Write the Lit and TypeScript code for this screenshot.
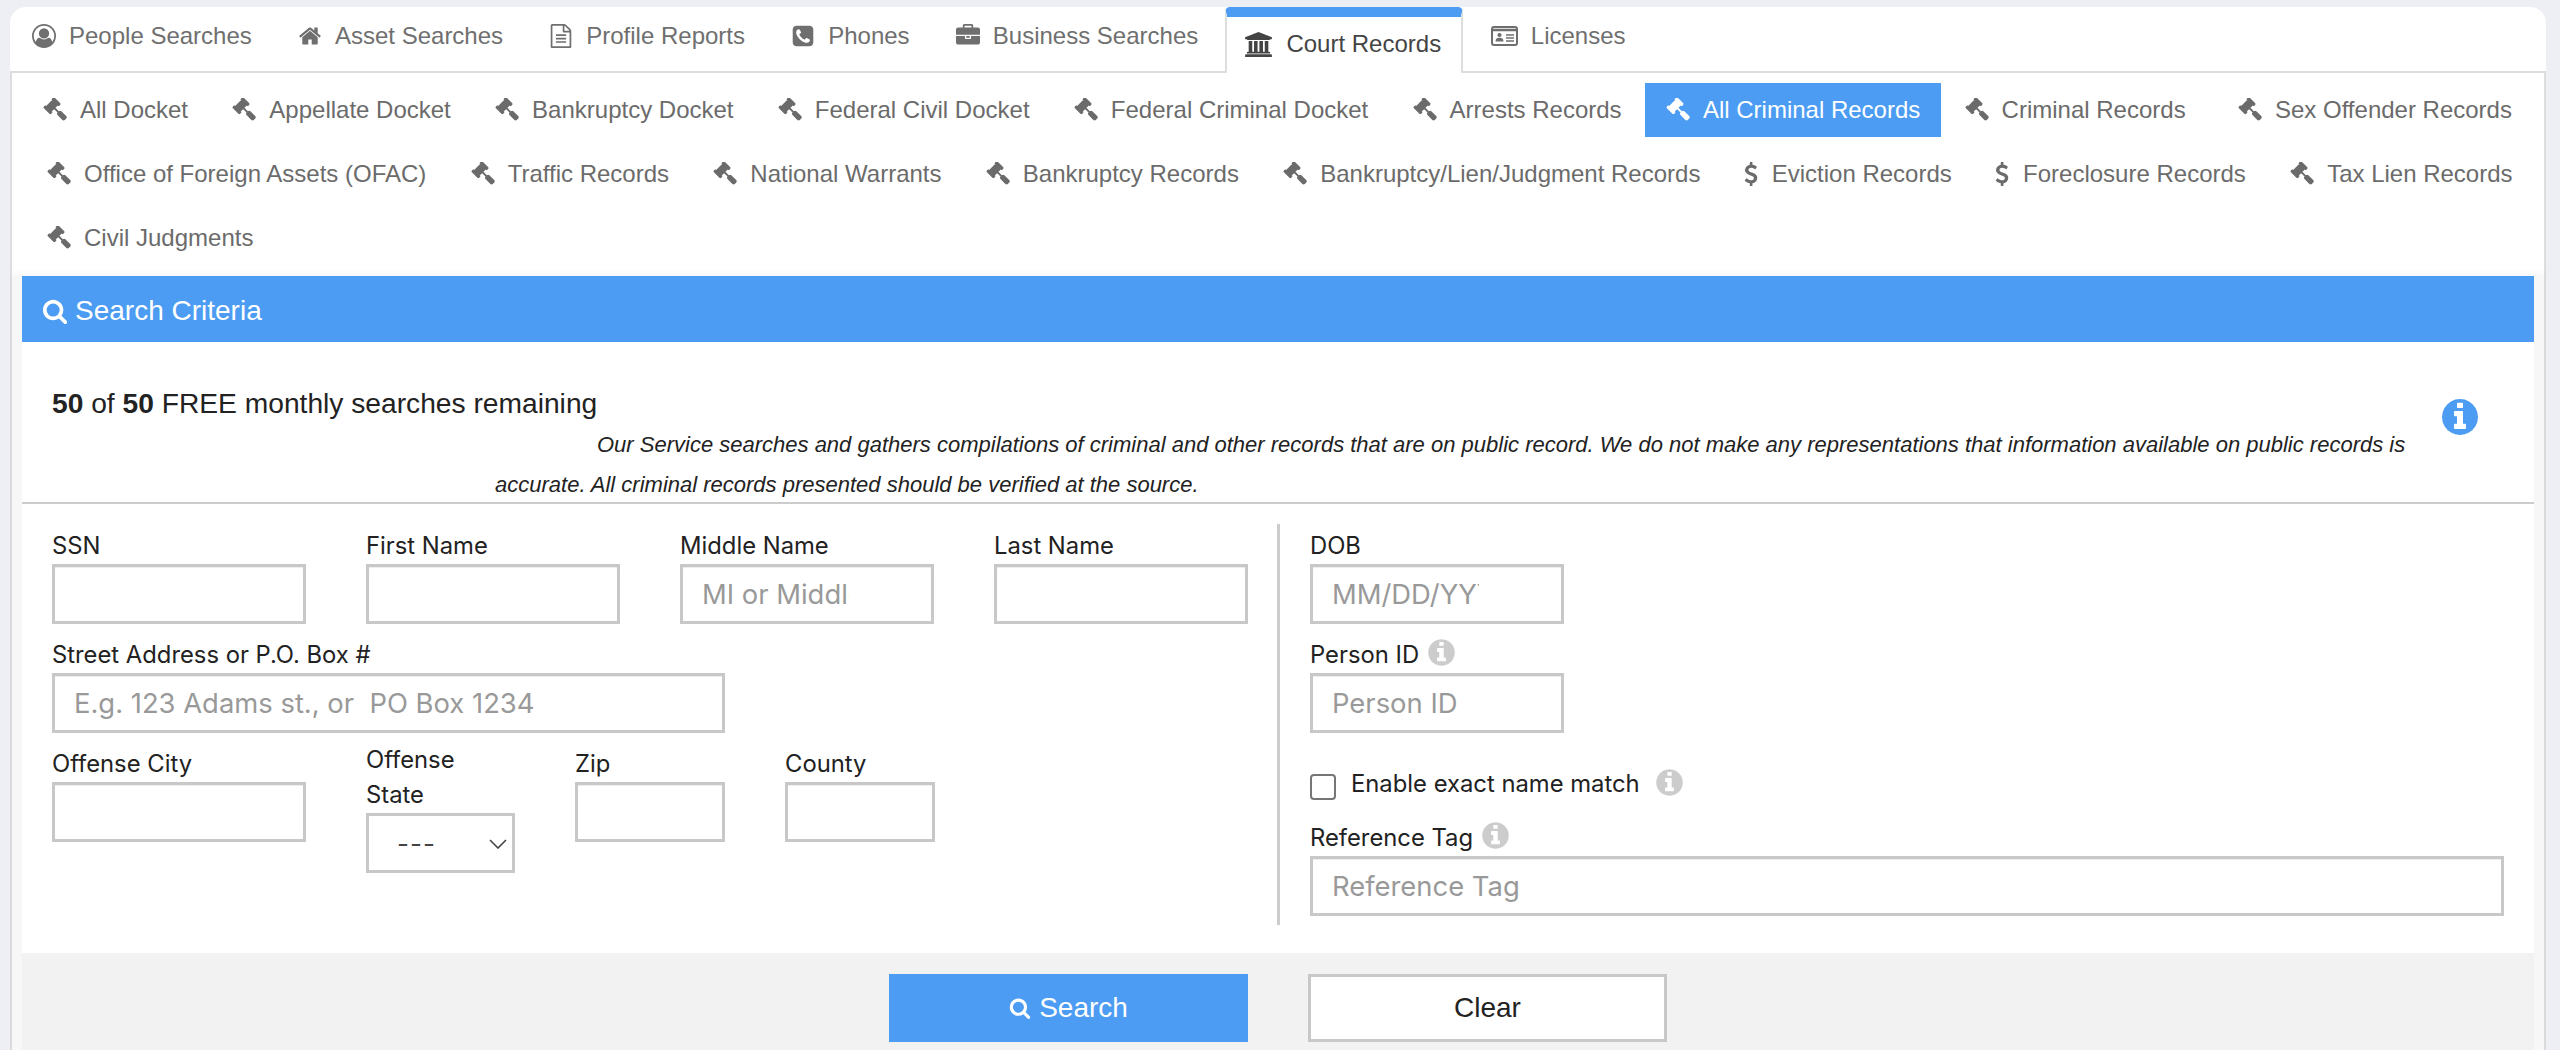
import { LitElement, html, css, svg } from "lit";
import { customElement } from "lit/decorators.js";

const P: Record<string, string> = {
  gavel: "M1771 1440q0 53-37 90l-107 108q-39 37-91 37-53 0-90-37l-363-364q-38-36-38-90 0-53 43-96l-256-256-126 126q-14 14-34 14t-34-14q2 2 12.5 12t12.5 13 10 11.5 10 13.5 6 13.5 5.5 16.5 1.5 18q0 38-28 68-3 3-16.5 18t-19 20.5-18.5 16.5-22 15.5-22 9-26 4.5q-40 0-68-28l-408-408q-28-28-28-68 0-13 4.5-26t9-22 15.5-22 16.5-18.5 20.5-19 18-16.5q30-28 68-28 10 0 18 1.5t16.5 5.5 13.5 6 13.5 10 11.5 10 13 12.5 12 12.5q-14-14-14-34t14-34l348-348q14-14 34-14t34 14q-2-2-12.5-12t-12.5-13-10-11.5-10-13.5-6-13.5-5.5-16.5-1.5-18q0-38 28-68 3-3 16.5-18t19-20.5 18.5-16.5 22-15.5 22-9 26-4.5q40 0 68 28l408 408q28 28 28 68 0 13-4.5 26t-9 22-15.5 22-16.5 18.5-20.5 19-18 16.5q-30 28-68 28-10 0-18-1.5t-16.5-5.5-13.5-6-13.5-10-11.5-10-13-12.5-12-12.5q14 14 14 34t-14 34l-126 126 256 256q43-43 96-43 52 0 91 37l363 363q37 39 37 91z",
  search: "M1216 832q0-185-131.5-316.5t-316.5-131.5-316.5 131.5-131.5 316.5 131.5 316.5 316.5 131.5 316.5-131.5 131.5-316.5zm512 832q0 52-38 90t-90 38q-54 0-90-38l-343-342q-179 124-399 124-143 0-273.5-55.5t-225-150-150-225-55.5-273.5 55.5-273.5 150-225 225-150 273.5-55.5 273.5 55.5 225 150 150 225 55.5 273.5q0 220-124 399l343 343q37 37 37 90z",
  info: "M1152 1376v-160q0-14-9-23t-23-9h-96v-512q0-14-9-23t-23-9h-320q-14 0-23 9t-9 23v160q0 14 9 23t23 9h96v320h-96q-14 0-23 9t-9 23v160q0 14 9 23t23 9h448q14 0 23-9t9-23zm-128-896v-160q0-14-9-23t-23-9h-192q-14 0-23 9t-9 23v160q0 14 9 23t23 9h192q14 0 23-9t9-23zm640 416q0 209-103 385.5t-279.5 279.5-385.5 103-385.5-103-279.5-279.5-103-385.5 103-385.5 279.5-279.5 385.5-103 385.5 103 279.5 279.5 103 385.5z",
  home: "M1472 992v480q0 26-19 45t-45 19h-384v-384h-256v384h-384q-26 0-45-19t-19-45v-480q0-1 .5-3t.5-3l575-474 575 474q1 2 1 6zm223-69l-62 74q-8 9-21 11h-3q-13 0-21-7l-692-577-692 577q-12 8-24 7-13-2-21-11l-62-74q-8-10-7-23.5t11-21.5l719-599q32-26 76-26t76 26l244 204v-195q0-14 9-23t23-9h192q14 0 23 9t9 23v408l219 182q10 8 11 21.5t-7 23.5z",
  file: "M1596 380q28 28 48 76t20 88v1152q0 40-28 68t-68 28h-1344q-40 0-68-28t-28-68v-1600q0-40 28-68t68-28h896q40 0 88 20t76 48zm-444-244v376h376q-10-29-22-41l-313-313q-12-12-41-22zm384 1528v-1024h-416q-40 0-68-28t-28-68v-416h-768v1536h1280zm-1024-864q0-14 9-23t23-9h704q14 0 23 9t9 23v64q0 14-9 23t-23 9h-704q-14 0-23-9t-9-23v-64zm736 224q14 0 23 9t9 23v64q0 14-9 23t-23 9h-704q-14 0-23-9t-9-23v-64q0-14 9-23t23-9h704zm0 256q14 0 23 9t9 23v64q0 14-9 23t-23 9h-704q-14 0-23-9t-9-23v-64q0-14 9-23t23-9h704z",
  phone: "M1408 1193q0-11-2-16t-18-16.5-40.5-25-47.5-26.5-45.5-25-28.5-15q-5-3-19-13t-25-15-21-5q-15 0-36.5 20.5t-39.5 45-38.5 45-33.5 20.5q-7 0-16.5-3.5t-15.5-6.5-17-9.5-14-8.5q-99-55-170-126.5t-127-170.5q-2-3-8.5-14t-9.5-17-6.5-15.5-3.5-16.5q0-13 20.5-33.5t45-38.5 45-39.5 20.5-36.5q0-10-5-21t-15-25-13-19q-3-6-15-28.5t-25-45.5-26.5-47.5-25-40.5-16.5-18-16-2q-48 0-101 22-46 21-80 94.5t-34 130.5q0 16 2.5 34t5 30.5 9 33 10 29.5 12.5 33 11 30q60 164 216.5 320.5t320.5 216.5q6 2 30 11t33 12.5 29.5 10 33 9 30.5 5 34 2.5q57 0 130.5-34t94.5-80q22-53 22-101zm256-777v960q0 119-84.5 203.5t-203.5 84.5h-960q-119 0-203.5-84.5t-84.5-203.5v-960q0-119 84.5-203.5t203.5-84.5h960q119 0 203.5 84.5t84.5 203.5z",
  briefcase: "M640 256h512v-128h-512v128zm1152 640v480q0 66-47 113t-113 47h-1472q-66 0-113-47t-47-113v-480h672v160q0 26 19 45t45 19h320q26 0 45-19t19-45v-160h672zm-768 0v128h-256v-128h256zm768-480v384h-1792v-384q0-66 47-113t113-47h352v-160q0-40 28-68t68-28h576q40 0 68 28t28 68v160h352q66 0 113 47t47 113z",
  bank: "M960 0l960 384v128h-128q0 26-20.5 45t-48.5 19h-1526q-28 0-48.5-19t-20.5-45h-128v-128zm-704 640h256v768h128v-768h256v768h128v-768h256v768h128v-768h256v768h59q28 0 48.5 19t20.5 45v64h-1664v-64q0-26 20.5-45t48.5-19h59v-768zm1595 960q28 0 48.5 19t20.5 45v128h-1920v-128q0-26 20.5-45t48.5-19h1782z",
  user: "M896 0q182 0 348 71t286 191 191 286 71 348q0 181-70.5 347t-190.5 286-286 191.5-349 71.5-349-71-285.5-191.5-190.5-286-71-347.5 71-348 191-286 286-191 348-71zm619 1351q149-205 149-455 0-156-61-298t-164-245-245-164-298-61-298 61-245 164-164 245-61 298q0 250 149 455 66-327 306-327 131 128 313 128t313-128q240 0 306 327zm-235-647q0-159-112.5-271.5t-271.5-112.5-271.5 112.5-112.5 271.5 112.5 271.5 271.5 112.5 271.5-112.5 112.5-271.5z",
  dollar: "M1362 1185q0 153-99.5 263.5t-258.5 136.5v175q0 14-9 23t-23 9h-135q-13 0-22.5-9.5t-9.5-22.5v-175q-66-9-127.5-31t-101.5-44.5-74-48-46.5-37.5-17.5-18q-17-21-2-41l103-135q7-10 23-12 15-2 24 9l2 2q113 99 243 125 37 8 74 8 81 0 142.5-43t61.5-122q0-28-15-53t-33.5-42-58.5-37.5-66-32-80-32.5q-39-16-61.5-25t-61.5-26.5-62.5-31-56.5-35.5-53.5-42.5-43.5-49-35.5-58-21-66.5-8.5-78q0-138 98-242t255-134v-180q0-13 9.5-22.5t22.5-9.5h135q14 0 23 9t9 23v176q57 6 110.5 23t87 33.5 63.5 37.5 39 29 15 14q17 18 5 38l-81 146q-8 15-23 16-14 3-27-7-3-3-14.5-12t-39-26.5-58.5-32-74.5-26-85.5-11.5q-95 0-155 43t-60 111q0 26 8.5 48t29.5 41.5 39.5 33 56 31 60.5 27 70 27.5q53 20 81 31.5t76 35 75.5 42.5 62 50 53 63.5 31.5 76.5 13 94z",
};

function icon(name: string, cls = "ic") {
  if (name === "idcard") {
    return html`<svg class="ic idcard" viewBox="0 0 27 24" fill="none" stroke="currentColor" stroke-width="2">
      <rect x="1" y="3" width="25" height="18" rx="2"></rect>
      <path d="M1 6h25" stroke-width="2.4"></path>
      <circle cx="8.5" cy="11" r="2.1" fill="currentColor" stroke="none"></circle>
      <path d="M4.5 17.5c0-2.8 1.500-3.800 4-3.800s4 1 4 3.800z" fill="currentColor" stroke="none"></path>
      <path d="M15 11h8M15 14h8M15 17h8" stroke-width="1.300"></path>
    </svg>`;
  }
  const vb = name === "bank" ? "0 0 1920 1792" : "0 0 1792 1792";
  return html`<svg class=${cls + " " + name} viewBox=${vb} fill="currentColor">${svg`<path d=${P[name]}></path>`}</svg>`;
}

const TABS = [
  ["user", "People Searches"],
  ["home", "Asset Searches"],
  ["file", "Profile Reports"],
  ["phone", "Phones"],
  ["briefcase", "Business Searches"],
  ["bank", "Court Records", "on"],
  ["idcard", "Licenses"],
];

const ROWS: [string, string, string?][][] = [
  [["gavel", "All Docket"], ["gavel", "Appellate Docket"], ["gavel", "Bankruptcy Docket"], ["gavel", "Federal Civil Docket"], ["gavel", "Federal Criminal Docket"], ["gavel", "Arrests Records"], ["gavel", "All Criminal Records", "on"], ["gavel", "Criminal Records"], ["gavel", "Sex Offender Records", "far"]],
  [["gavel", "Office of Foreign Assets (OFAC)"], ["gavel", "Traffic Records"], ["gavel", "National Warrants"], ["gavel", "Bankruptcy Records"], ["gavel", "Bankruptcy/Lien/Judgment Records"], ["dollar", "Eviction Records"], ["dollar", "Foreclosure Records"], ["gavel", "Tax Lien Records"]],
  [["gavel", "Civil Judgments"]],
];

@customElement("app-root")
export class AppRoot extends LitElement {
  static styles = css`
    :host { display: block; height: 1050px; overflow: hidden; background: #edeff5; font-family: "Liberation Sans", Arial, sans-serif; }
    * { box-sizing: border-box; }
    .card { margin: 7px 14px 0 10px; height: 1043px; background: #fff; border-radius: 16px 16px 0 0; overflow: hidden; display: flex; flex-direction: column; }
    .tabs { display: flex; height: 66px; border-bottom: 2px solid #ddd; gap: 4.2px; padding-left: 1px; flex: none; }
    .tab { display: flex; align-items: flex-start; gap: 13px; padding: 17px 21px 0; font-size: 24px; line-height: 24px; color: #6f6f6f; height: 66px; white-space: nowrap; }
    .tab.on { border: 2px solid #ddd; border-top: 10px solid #4b9cf2; border-bottom: 0; border-radius: 5px 5px 0 0; background: #fff; color: #444; padding: 15px 20px 0 18px; margin: 0 2.5px 0 1.5px; gap: 14.5px; }
    .ic { width: 24px; height: 24px; flex: none; display: block; }
    .ic.bank { width: 27px; height: 25px; }
    .ic.idcard { width: 27px; height: 24px; }
    .ic.dollar { margin-right: -4px; margin-left: -6px; }
    .panel { flex: 1; border-left: 2px solid #ddd; border-right: 2px solid #ddd; display: flex; flex-direction: column; min-height: 0; }
    .pills { display: flex; flex-direction: column; gap: 10px; padding: 10px 0 11px 10px; flex: none; }
    .row { display: flex; gap: 2.3px; height: 54px; }
    .row.r2, .row.r3 { padding-left: 4px; }
    .pill { display: flex; align-items: center; gap: 13px; padding: 0 21px; font-size: 24px; color: #6b6b6b; white-space: nowrap; }
    .pill.on { background: #4b9cf2; color: #fff; }
    .pill.far { margin-left: 8px; }
    .wrap { flex: 1; padding: 0 10px; background: #f7f7f7; box-shadow: 0 -3px 6px rgba(0,0,0,.04); display: flex; flex-direction: column; }
    .head { height: 66px; background: #4b9cf2; color: #fff; font-size: 28px; display: flex; align-items: center; gap: 7px; padding: 4px 0 0 20px; flex: none; }
    .head .ic { width: 26px; height: 26px; }
    .body { background: #fff; flex: none; }
    .notice { height: 162px; border-bottom: 2px solid #ccc; display: flex; padding-left: 30px; }
    .ntext { flex: 1; padding-top: 43px; color: #222; }
    .count { font-size: 28.2px; line-height: 36px; height: 40px; }
    .legal { margin-left: 443px; font-style: italic; font-size: 22px; line-height: 40px; white-space: nowrap; text-indent: 102px; color: #222; }
    .legal span { display: block; }
    .legal span + span { text-indent: 0; }
    .ninfo { color: #4b9cf2; width: 42px; height: 42px; margin: 54px 53px 0 0; }
    .form { display: flex; padding: 20px 0 28px; font-family: Inter, "Liberation Sans", sans-serif; }
    .left { width: 1255px; padding: 4px 0 0 30px; display: flex; flex-direction: column; gap: 13px; flex: none; }
    .right { flex: 1; border-left: 3px solid #ccc; padding: 4px 30px 9px 30px; display: flex; flex-direction: column; }
    .line { display: flex; gap: 60px; }
    .line.third { margin-top: -4px; gap: 0; }
    label { display: flex; align-items: center; gap: 7px; height: 36px; font-size: 23.8px; color: #222; white-space: nowrap; padding-bottom: 1px; }
    .f { display: flex; flex-direction: column; }
    .w254 { width: 254px; } .w150 { width: 150px; } .w673 { width: 673px; }
    .third .f { padding-top: 4px; }
    .third .s { padding-top: 0; width: 149px; margin: 0 60px; }
    .two { height: 71px; line-height: 35px; white-space: normal; display: block; width: 120px; padding: 0; }
    .third .z { margin-right: 60px; }
    .next { margin-top: 13px; }
    input.t { width: 100%; height: 60px; border: 3px solid #c8c8c8; background: #fff; padding: 0 82px 1px 19px; font: 400 27.4px Inter, "Liberation Sans", sans-serif; color: #222; outline: none; border-radius: 0; margin: 0; display: block; box-shadow: inset 0 1px 1px rgba(0,0,0,.075); }
    input.t::placeholder { color: #999; opacity: 1; }
    input.wide { padding-right: 20px; }
    .sel { position: relative; height: 60px; }
    select { appearance: none; -webkit-appearance: none; width: 100%; height: 100%; border: 3px solid #c8c8c8; background: #fff; padding: 0 0 0 28px; font: 400 26px Inter, sans-serif; letter-spacing: 1px; color: #444; border-radius: 0; }
    .chev { position: absolute; left: 123px; top: 26px; width: 18px; height: 10px; }
    .gi { color: #ccc; width: 31px; height: 31px; margin-bottom: 4px; }
    .chk { display: flex; align-items: flex-start; gap: 15px; margin-top: 41px; height: 26px; font-size: 23.8px; color: #222; }
    .chk input { appearance: none; -webkit-appearance: none; margin: 0; width: 26px; height: 26px; border: 2px solid #767676; border-radius: 4px; background: #fff; flex: none; }
    .chk span { line-height: 20px; white-space: nowrap; }
    .chk .gi { margin: -7.5px 0 0 -1px; }
    .ref { margin-top: 20px; }
    .actions { flex: 1; background: #f2f2f2; display: flex; justify-content: center; gap: 60px; padding-top: 21px; }
    button { width: 359px; height: 68px; font: 400 28px "Liberation Sans", Arial, sans-serif; display: flex; align-items: center; justify-content: center; gap: 8px; border: 0; border-radius: 0; padding: 0; }
    .go { background: #4b9cf2; color: #fff; }
    .go .ic { width: 22px; height: 22px; }
    .clr { background: #fff; border: 3px solid #c8c8c8; color: #222; }
  `;

  render() {
    return html`<div class="card">
      <div class="tabs">
        ${TABS.map(([i, t, c]) => html`<div class="tab ${c || ""}">${icon(i)}<span>${t}</span></div>`)}
      </div>
      <div class="panel">
        <div class="pills">
          ${ROWS.map((r, n) => html`<div class="row r${n + 1}">
            ${r.map(([i, t, c]) => html`<div class="pill ${c || ""}">${icon(i)}<span>${t}</span></div>`)}
          </div>`)}
        </div>
        <div class="wrap">
          <div class="head">${icon("search")}<span>Search Criteria</span></div>
          <div class="body">
            <div class="notice">
              <div class="ntext">
                <div class="count"><b>50</b> of <b>50</b> FREE monthly searches remaining</div>
                <div class="legal">
                  <span>Our Service searches and gathers compilations of criminal and other records that are on public record. We do not make any representations that information available on public records is</span>
                  <span>accurate. All criminal records presented should be verified at the source.</span>
                </div>
              </div>
              ${icon("info", "ic ninfo")}
            </div>
            <div class="form">
              <div class="left">
                <div class="line">
                  <div class="f w254"><label>SSN</label><input class="t" /></div>
                  <div class="f w254"><label>First Name</label><input class="t" /></div>
                  <div class="f w254"><label>Middle Name</label><input class="t" placeholder="MI or Middle Name" /></div>
                  <div class="f w254"><label>Last Name</label><input class="t" /></div>
                </div>
                <div class="line">
                  <div class="f w673"><label>Street Address or P.O. Box #</label><input class="t wide" placeholder="E.g. 123 Adams st., or  PO Box 1234" /></div>
                </div>
                <div class="line third">
                  <div class="f w254"><label>Offense City</label><input class="t" /></div>
                  <div class="f s">
                    <label class="two">Offense State</label>
                    <div class="sel">
                      <select><option>---</option></select>
                      <svg class="chev" viewBox="0 0 18 10" fill="none" stroke="#444" stroke-width="1.6"><path d="M1 1l8 8 8-8"></path></svg>
                    </div>
                  </div>
                  <div class="f w150 z"><label>Zip</label><input class="t" /></div>
                  <div class="f w150"><label>County</label><input class="t" /></div>
                </div>
              </div>
              <div class="right">
                <div class="f w254"><label>DOB</label><input class="t" placeholder="MM/DD/YYYY" /></div>
                <div class="f w254 next"><label>Person ID ${icon("info", "ic gi")}</label><input class="t" placeholder="Person ID" /></div>
                <div class="chk"><input type="checkbox" /><span>Enable exact name match</span>${icon("info", "ic gi")}</div>
                <div class="f ref"><label>Reference Tag ${icon("info", "ic gi")}</label><input class="t wide" placeholder="Reference Tag" /></div>
              </div>
            </div>
          </div>
          <div class="actions">
            <button class="go">${icon("search")}<span>Search</span></button>
            <button class="clr">Clear</button>
          </div>
        </div>
      </div>
    </div>`;
  }
}
